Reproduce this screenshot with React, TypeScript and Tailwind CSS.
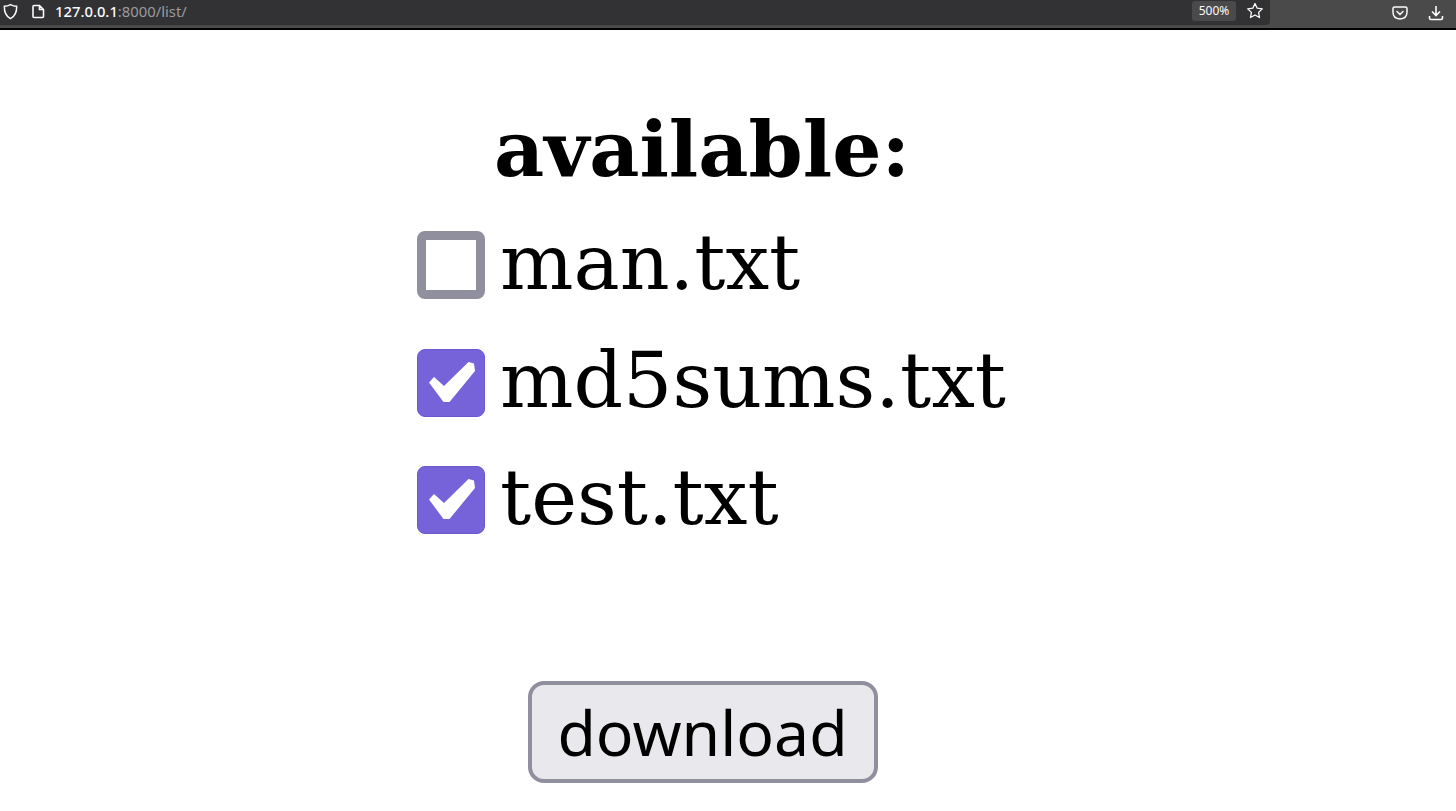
import React from 'react';

const files = [
  { name: 'man.txt', checked: false },
  { name: 'md5sums.txt', checked: true },
  { name: 'test.txt', checked: true },
];

const CheckBox: React.FC<{ checked: boolean }> = ({ checked }) =>
  checked ? (
    <span className="flex h-[68px] w-[68px] shrink-0 items-center justify-center rounded-[8px] border border-[#6a58d0] bg-[#7763d9]">
      <svg width="68" height="68" viewBox="0 0 68 68" className="shrink-0">
        <path d="M12 33.500 L17 28 L27 37 L51.500 13 L57 14.500 L58 22 L32.500 53 L26.500 53 Z" fill="#ffffff" />
      </svg>
    </span>
  ) : (
    <span className="h-[68px] w-[68px] shrink-0 rounded-[8px] border-[9px] border-[#8f8f9d] bg-white" />
  );

const Toolbar: React.FC = () => (
  <div className="flex h-[30px] border-b-2 border-black bg-[#4a4a4a]">
    <div className="flex h-[25px] w-[1270px] items-center rounded-br-[4px] bg-[#323234] pl-[3px] pr-[5px]">
      <svg width="15" height="17" viewBox="0 0 14 16" fill="none" stroke="#fbfbfe" strokeWidth="1.4" className="mb-[2px]">
        <path d="M7 1.500 C9 2.600 11 3 12.800 3 C13 8.500 11 12.500 7 14.800 C3 12.500 1 8.500 1.200 3 C3 3 5 2.600 7 1.500 Z" />
      </svg>
      <svg width="14" height="16" viewBox="0 0 14 16" fill="none" stroke="#fbfbfe" strokeWidth="1.6" className="mb-[2px] ml-[13px]">
        <path d="M2 2.500 Q2 1.500 3 1.500 H8.500 L12.500 5.500 V12.500 Q12.500 13.500 11.500 13.500 H3 Q2 13.500 2 12.500 Z M8.500 1.500 V5.500 H12.500" />
      </svg>
      <span className="mb-[2px] ml-[10px] font-['Noto_Sans',sans-serif] text-[14.800px] font-medium text-[#fbfbfe]">
        127.0.0.1<span className="font-normal text-[#9a9a9f]">:8000/list/</span>
      </span>
      <span className="mb-[3px] ml-auto flex h-[20px] w-[44px] items-center justify-center rounded-[3px] bg-[#4a4a4d] font-['Noto_Sans',sans-serif] text-[12px] text-[#fbfbfe]">
        500%
      </span>
      <svg width="18" height="18" viewBox="0 0 18 18" fill="none" stroke="#fbfbfe" strokeWidth="1.3" strokeLinejoin="round" className="mb-[3px] ml-[10px] mr-[1px]">
        <path d="M9 1.500 L11.200 6.200 L16.300 6.900 L12.600 10.400 L13.500 15.500 L9 13 L4.500 15.500 L5.400 10.400 L1.700 6.900 L6.800 6.200 Z" />
      </svg>
    </div>
    <div className="flex h-[25px] flex-1 items-center justify-end pr-[12px]">
      <svg width="16" height="16" viewBox="0 0 16 16" fill="none" stroke="#fbfbfe" strokeWidth="1.5" className="mr-[20px]">
        <path d="M2.500 2 H13.500 Q15 2 15 3.500 V7 Q15 13.500 8 14 Q1 13.500 1 7 V3.500 Q1 2 2.500 2 Z" />
        <path d="M5 6.500 L8 9.500 L11 6.500" strokeLinecap="round" />
      </svg>
      <svg width="16" height="16" viewBox="0 0 16 16" fill="none" stroke="#fbfbfe" strokeWidth="1.6">
        <path d="M8 1 V10 M4 6.500 L8 10.500 L12 6.500 M1.500 11 V13 Q1.500 14.500 3 14.500 H13 Q14.500 14.500 14.500 13 V11" />
      </svg>
    </div>
  </div>
);

export default function App() {
  return (
    <div className="h-[811px] overflow-hidden bg-white font-['DejaVu_Serif',serif] text-black">
      <Toolbar />
      <main className="flex flex-col items-center pr-[51px]">
        <h1 className="ml-[-1px] mt-[69px] h-[100px] text-[77.500px] font-bold leading-[100px]">available:</h1>
        <ul className="mt-[32px] flex w-[571px] flex-col gap-[49.500px]">
          {files.map((file) => (
            <li key={file.name} className="flex h-[68px] items-center gap-[15px]">
              <CheckBox checked={file.checked} />
              <span className="whitespace-nowrap pb-[6px] text-[77.500px] leading-[68px]">{file.name}</span>
            </li>
          ))}
        </ul>
        <button className="mt-[147px] flex h-[102px] w-[350px] items-center justify-center rounded-[16px] border-[4px] border-[#8f8f9d] bg-[#e9e9ed] font-['Noto_Sans',sans-serif] text-[62.500px] leading-none">
          download
        </button>
      </main>
    </div>
  );
}
